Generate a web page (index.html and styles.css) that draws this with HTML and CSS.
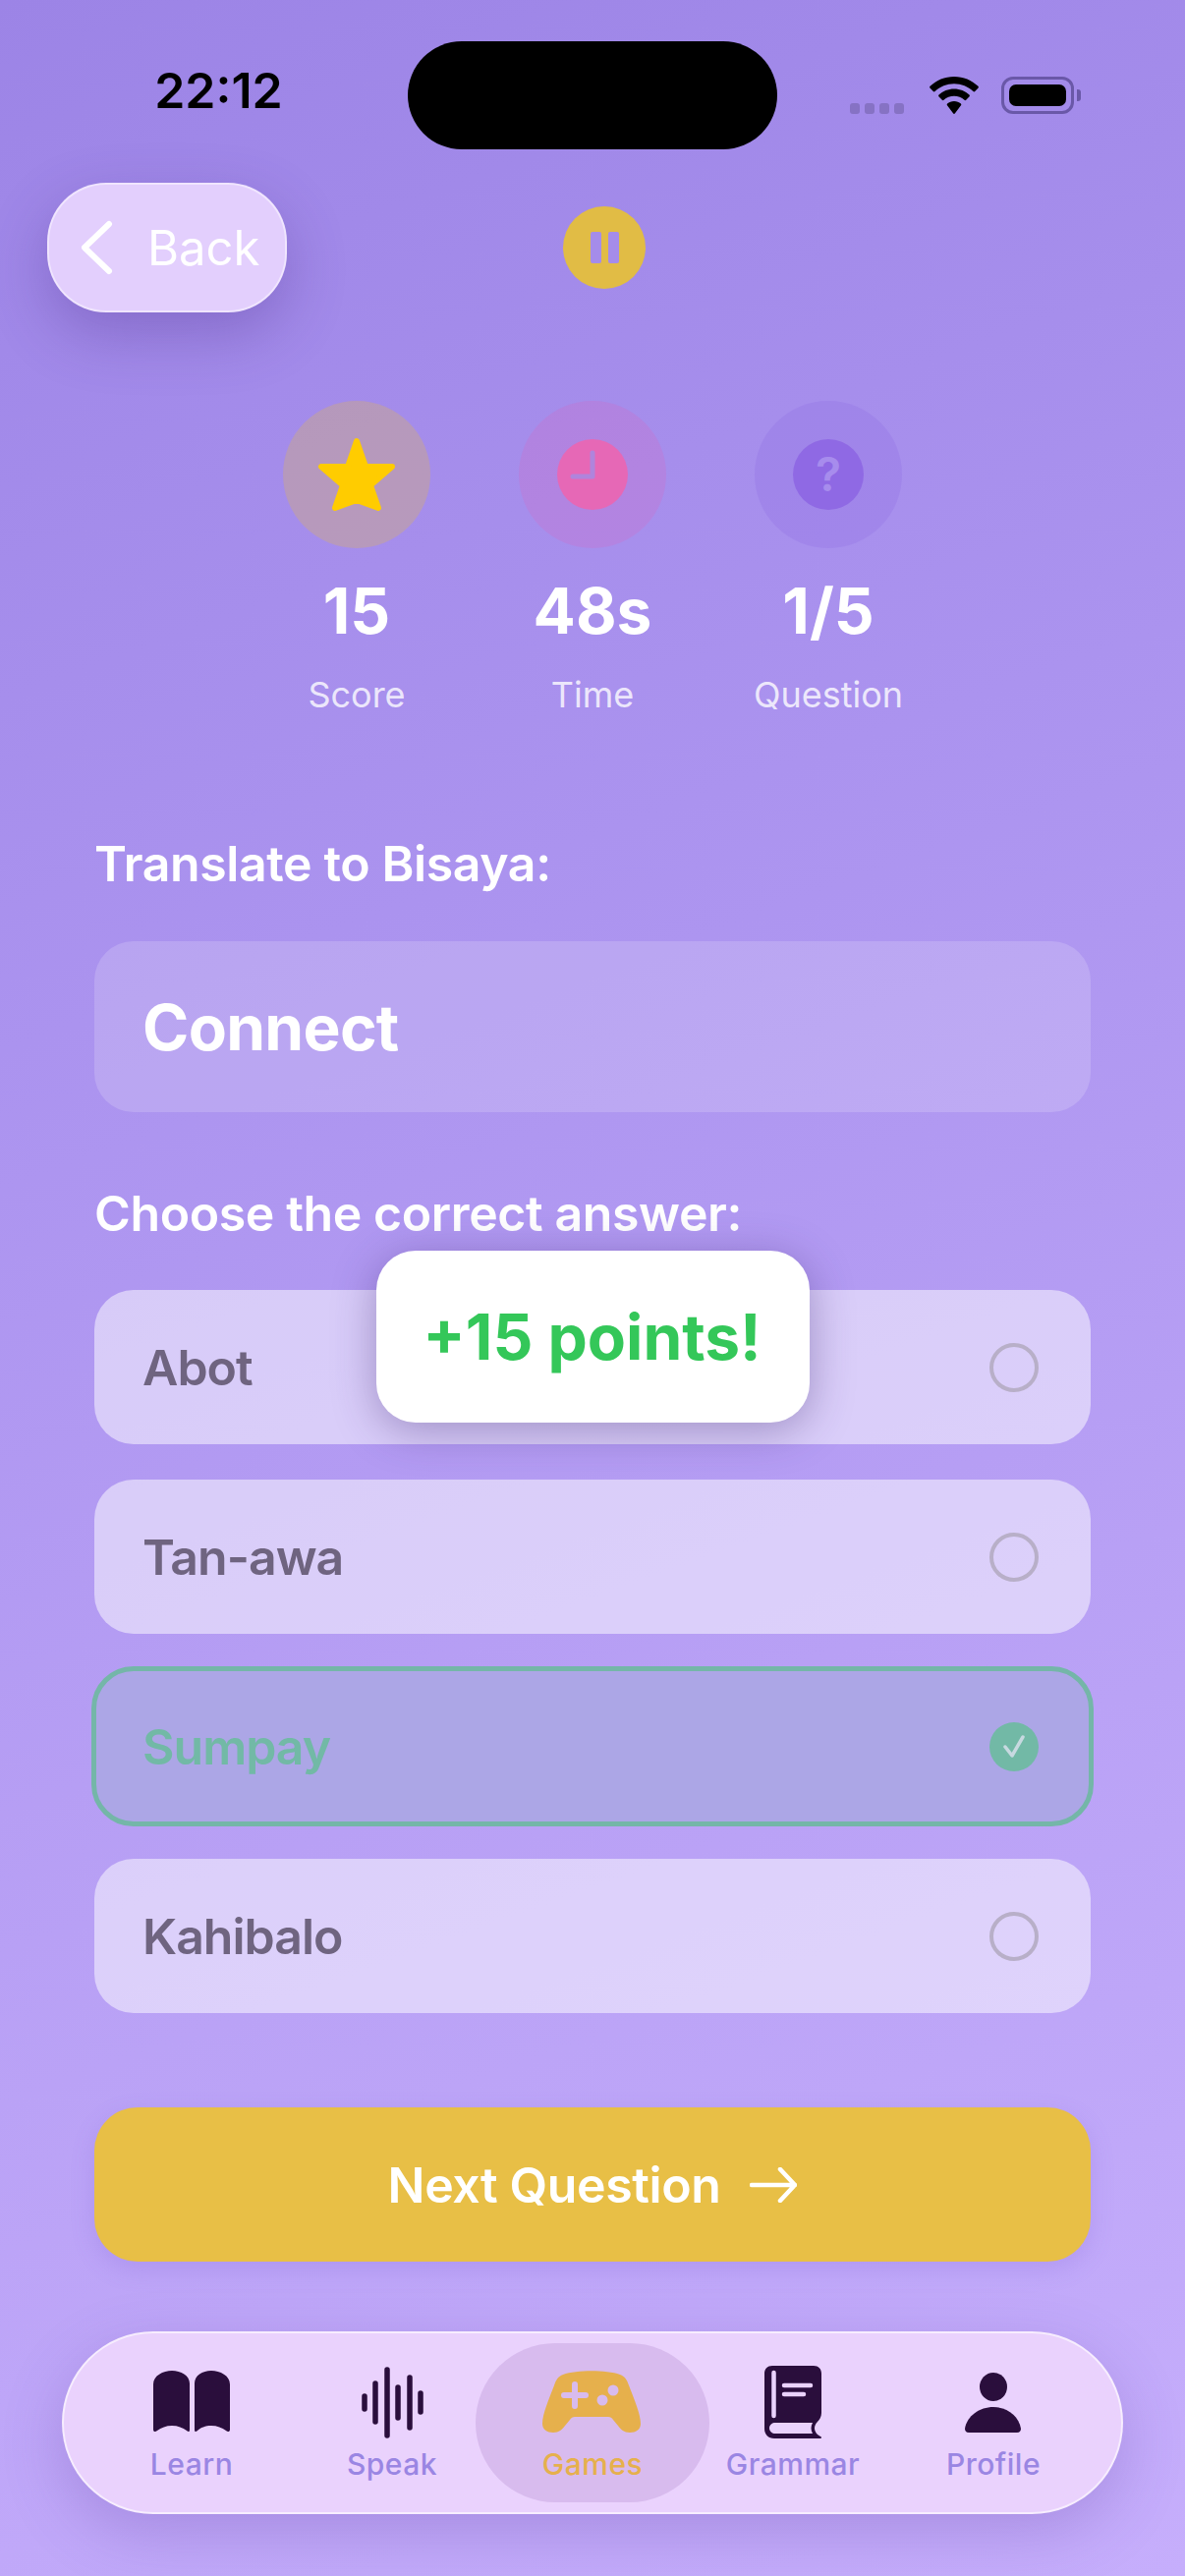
FILE: index.html
```html
<!DOCTYPE html>
<html>
<head>
    <meta charset="UTF-8">
    <title>Bisaya Quiz</title>
    <link rel="stylesheet" href="styles.css">
</head>
<body>
    <div class="status-bar">
        <div class="status-time">22:12</div>
        <div class="island"></div>
        <div class="status-icons">
            <div class="signal"><span></span><span></span><span></span><span></span></div>
            <svg class="wifi" width="50" height="38" viewBox="0 0 50 38">
                <path d="M25 0C15.500 0 7 3.700 0.500 9.800C0 10.300 0 11 0.400 11.500L3.800 15C4.300 15.500 5 15.500 5.500 15C10.700 10.200 17.500 7.300 25 7.300C32.500 7.300 39.300 10.200 44.500 15C45 15.500 45.700 15.500 46.200 15L49.600 11.500C50 11 50 10.300 49.500 9.800C43 3.700 34.500 0 25 0Z"/>
                <path d="M25 12.500C19 12.500 13.600 14.800 9.500 18.600C9 19.100 9 19.800 9.400 20.300L12.800 23.800C13.300 24.300 14 24.300 14.500 23.800C17.300 21.300 21 19.800 25 19.800C29 19.800 32.700 21.300 35.500 23.800C36 24.300 36.700 24.300 37.200 23.800L40.600 20.300C41 19.800 41 19.100 40.500 18.600C36.400 14.800 31 12.500 25 12.500Z"/>
                <path d="M25 25C22.300 25 19.900 26 18.100 27.600C17.600 28.100 17.600 28.800 18 29.300L24.200 37.600C24.600 38.100 25.400 38.100 25.800 37.600L32 29.300C32.400 28.800 32.400 28.100 31.900 27.600C30.100 26 27.700 25 25 25Z"/>
            </svg>
            <div class="battery"><div class="battery-level"></div></div>
            <div class="battery-cap"></div>
        </div>
    </div>

    <div class="top-row">
        <div class="back-btn">
            <svg width="36" height="60" viewBox="0 0 36 60">
                <path class="back-chevron" d="M32 6L7 30L32 54"/>
            </svg>
            <span>Back</span>
        </div>
        <div class="pause-btn"><span></span><span></span></div>
    </div>

    <div class="stats">
        <div class="stat">
            <div class="stat-circle score-circle">
                <svg width="84" height="80" viewBox="0 0 84 80">
                    <path class="star" d="M42 6L51 32H78L56 51L64 74L42 66L20 74L28 51L6 32H33Z"/>
                </svg>
            </div>
            <div class="stat-value">15</div>
            <div class="stat-label">Score</div>
        </div>
        <div class="stat">
            <div class="stat-circle time-circle">
                <div class="stat-inner time-inner">
                    <svg width="72" height="72" viewBox="0 0 72 72">
                        <path class="clock-hands" d="M36 14V38H16"/>
                    </svg>
                </div>
            </div>
            <div class="stat-value">48s</div>
            <div class="stat-label">Time</div>
        </div>
        <div class="stat">
            <div class="stat-circle question-circle">
                <div class="stat-inner question-inner">?</div>
            </div>
            <div class="stat-value">1/5</div>
            <div class="stat-label">Question</div>
        </div>
    </div>

    <div class="quiz">
        <h2 class="quiz-heading">Translate to Bisaya:</h2>
        <div class="word-box">Connect</div>
        <h2 class="quiz-heading answer-heading">Choose the correct answer:</h2>

        <div class="options">
            <div class="toast">+15 points!</div>
            <div class="option"><span>Abot</span><div class="radio"></div></div>
            <div class="option"><span>Tan-awa</span><div class="radio"></div></div>
            <div class="option correct">
                <span>Sumpay</span>
                <div class="radio-checked">
                    <svg width="50" height="50" viewBox="0 0 50 50">
                        <path d="M16 25L23 34L34 15"/>
                    </svg>
                </div>
            </div>
            <div class="option"><span>Kahibalo</span><div class="radio"></div></div>
        </div>

        <div class="next-btn">
            <span>Next Question</span>
            <svg width="48" height="36" viewBox="0 0 48 36">
                <path d="M2 18H46M31 2L46 18L31 34"/>
            </svg>
        </div>
    </div>

    <div class="tab-bar">
        <div class="tab">
            <svg class="tab-icon" width="120" height="76" viewBox="0 0 120 76">
                <path d="M21 20C21 11 31 6 40 6C49 6 58 11 58 19V66C58 68 57 69 55 67C51 64 46 62 40 62C34 62 29 64 25 67C23 69 21 68 21 66Z"/>
                <path d="M99 20C99 11 89 6 80 6C71 6 63 11 63 19V66C63 68 64 69 66 67C69 64 74 62 80 62C86 62 91 64 95 67C97 69 99 68 99 66Z"/>
            </svg>
            <span>Learn</span>
        </div>
        <div class="tab">
            <svg class="tab-icon wave" width="120" height="76" viewBox="0 0 120 76">
                <path d="M32 32V45M43 19V58M55 5V72M66 23V54M78 13V64M89 29V48"/>
            </svg>
            <span>Speak</span>
        </div>
        <div class="tab active">
            <svg class="tab-icon" width="120" height="76" viewBox="0 0 120 76">
                <path d="M30 10C44 5 74 5 88 10C93 12 95 15 97 21C102 34 109 50 109 60C109 66 104 69 98 69C92 69 89 66 86 62L81 56C80 54 78 53 76 53H42C40 53 38 54 37 56L32 62C29 66 26 69 20 69C14 69 9 66 9 60C9 50 16 34 21 21C23 15 25 12 30 10Z"/>
                <path class="pad-keys" d="M42 20V42M31 31H53"/>
                <circle class="pad-dot" cx="81" cy="26" r="5.500"/>
                <circle class="pad-dot" cx="70" cy="36" r="5.500"/>
            </svg>
            <span>Games</span>
        </div>
        <div class="tab">
            <svg class="tab-icon" width="120" height="76" viewBox="0 0 120 76">
                <path d="M39 1H81C86 1 89 4 89 9V49C89 53 87 56 85 58C81 62 81 67 85 71L88 73C90 74 89 75 87 75H41C35 75 31 71 31 65V9C31 4 34 1 39 1Z"/>
                <path class="book-page" d="M42 59H80C78 63 78 66 80 70H42C39 70 36 68 36 64.500C36 61 39 59 42 59Z"/>
                <path class="book-lines" d="M40.500 8V52M51 21H78M51 30H71"/>
            </svg>
            <span>Grammar</span>
        </div>
        <div class="tab">
            <svg class="tab-icon" width="120" height="76" viewBox="0 0 120 76">
                <ellipse cx="60" cy="22.500" rx="14" ry="14.500"/>
                <path d="M35 69C32 69 31 67 31 65C33 52 46 43 60 43C74 43 86 52 88 65C88 67 87 69 84 69Z"/>
            </svg>
            <span>Profile</span>
        </div>
    </div>
</body>
</html>
```

FILE: styles.css
```css
* {
    box-sizing: border-box;
}
html, body {
    margin: 0;
    padding: 0;
}
body {
    width: 1206px;
    height: 2622px;
    overflow: hidden;
    font-family: "Inter", "Liberation Sans", sans-serif;
    color: white;
    background: linear-gradient(160deg, #9c84e6 0%, #ab93ef 35%, #b8a0f5 65%, #c6aefc 100%);
}

/* status bar */
.status-bar {
    display: flex;
    padding-top: 42px;
    height: 152px;
}
.status-time {
    width: 415px;
    padding: 20px 0 0 30px;
    text-align: center;
    font-size: 50px;
    line-height: 60px;
    font-weight: 600;
    color: black;
}
.island {
    width: 376px;
    height: 110px;
    border-radius: 55px;
    background: black;
}
.status-icons {
    display: flex;
    align-items: flex-start;
    padding: 36px 0 0 74px;
}
.signal {
    display: flex;
    gap: 5px;
    margin-top: 27px;
}
.signal span {
    width: 10px;
    height: 11px;
    border-radius: 3px;
    background: #8672c4;
}
.wifi {
    margin-left: 26px;
}
.wifi path {
    fill: black;
}
.battery {
    width: 74px;
    height: 38px;
    margin-left: 23px;
    padding: 5px;
    border: 3px solid #6a58a8;
    border-radius: 12px;
}
.battery-level {
    height: 100%;
    border-radius: 7px;
    background: black;
}
.battery-cap {
    width: 4px;
    height: 12px;
    margin: 13px 0 0 3px;
    border-radius: 0 3px 3px 0;
    background: #6a58a8;
}

/* back and pause */
.top-row {
    display: flex;
    align-items: center;
    margin-top: 34px;
    padding-left: 48px;
}
.back-btn {
    display: flex;
    align-items: center;
    gap: 35px;
    width: 244px;
    height: 132px;
    padding-left: 29px;
    border: 2px solid rgba(255, 255, 255, 0.45);
    border-radius: 60px;
    background: #e3cffd;
    box-shadow: 0 22px 60px rgba(70, 40, 130, 0.3);
    font-size: 49px;
    font-weight: 400;
}
.back-chevron {
    fill: none;
    stroke: white;
    stroke-width: 6;
    stroke-linecap: round;
    stroke-linejoin: round;
}
.pause-btn {
    display: flex;
    justify-content: center;
    align-items: center;
    gap: 7px;
    width: 84px;
    height: 84px;
    margin-left: 281px;
    border-radius: 50%;
    background: #e1bc45;
}
.pause-btn span {
    width: 11px;
    height: 32px;
    border-radius: 2px;
    background: #a58cea;
}

/* stats */
.stats {
    display: flex;
    justify-content: center;
    gap: 90px;
    margin-top: 90px;
}
.stat {
    width: 150px;
    display: flex;
    flex-direction: column;
    align-items: center;
}
.stat-circle {
    display: flex;
    justify-content: center;
    align-items: center;
    width: 150px;
    height: 150px;
    border-radius: 50%;
}
.score-circle {
    background: rgba(255, 204, 0, 0.2);
}
.time-circle {
    background: rgba(255, 70, 160, 0.14);
}
.question-circle {
    background: rgba(120, 80, 220, 0.14);
}
.stat-inner {
    width: 72px;
    height: 72px;
    border-radius: 50%;
    text-align: center;
}
.star {
    fill: #ffcc00;
    stroke: #ffcc00;
    stroke-width: 6;
    stroke-linejoin: round;
}
.time-inner {
    background: #e668b6;
}
.clock-hands {
    fill: none;
    stroke: #b084dc;
    stroke-width: 5;
    stroke-linecap: round;
    stroke-linejoin: round;
}
.question-inner {
    background: #8f69e4;
    color: #a78ced;
    font-size: 48px;
    line-height: 72px;
    font-weight: 600;
}
.stat-value {
    margin-top: 25px;
    font-size: 64px;
    line-height: 78px;
    font-weight: 700;
    white-space: nowrap;
}
.stat-label {
    margin-top: 24px;
    font-size: 36px;
    line-height: 44px;
    color: rgba(255, 255, 255, 0.8);
    white-space: nowrap;
}

/* quiz */
.quiz {
    margin-top: 121px;
    padding: 0 96px;
}
.quiz-heading {
    margin: 0;
    font-size: 50px;
    line-height: 58px;
    font-weight: 600;
    letter-spacing: -0.4px;
}
.answer-heading {
    margin-top: 74px;
}
.word-box {
    display: flex;
    align-items: center;
    height: 174px;
    margin-top: 50px;
    padding-left: 49px;
    border-radius: 40px;
    background: rgba(255, 255, 255, 0.17);
    font-size: 64px;
    font-weight: 700;
    letter-spacing: -0.7px;
}
.options {
    position: relative;
    display: flex;
    flex-direction: column;
    gap: 36px;
    margin-top: 49px;
}
.option {
    display: flex;
    justify-content: space-between;
    align-items: center;
    height: 157px;
    padding: 0 53px 0 49px;
    border-radius: 40px;
    background: rgba(255, 255, 255, 0.5);
    color: #6f6480;
    font-size: 50px;
    font-weight: 600;
    letter-spacing: -1px;
}
.option.correct {
    background: #aca6e6;
    color: #72b9a6;
    outline: 5px solid #74b6a8;
    outline-offset: -2px;
}
.radio {
    width: 50px;
    height: 50px;
    border: 4px solid #b8afc8;
    border-radius: 50%;
}
.radio-checked {
    width: 50px;
    height: 50px;
    border-radius: 50%;
    background: #72b9a6;
}
.radio-checked svg {
    display: block;
}
.radio-checked path {
    fill: none;
    stroke: #c7d9e0;
    stroke-width: 3.500;
    stroke-linecap: round;
    stroke-linejoin: round;
}
.toast {
    position: absolute;
    left: 287px;
    top: -40px;
    display: flex;
    justify-content: center;
    align-items: center;
    width: 441px;
    height: 175px;
    padding-right: 2px;
    border-radius: 40px;
    background: white;
    box-shadow: 0 8px 44px rgba(60, 40, 110, 0.38);
    color: #34c759;
    font-size: 64px;
    font-weight: 700;
}
.next-btn {
    display: flex;
    justify-content: center;
    align-items: center;
    gap: 30px;
    height: 157px;
    margin-top: 96px;
    border-radius: 44px;
    background: #e8bf46;
    box-shadow: 0 8px 24px rgba(120, 90, 210, 0.2);
    font-size: 50px;
    font-weight: 600;
    letter-spacing: -0.4px;
}
.next-btn path {
    fill: none;
    stroke: white;
    stroke-width: 4.500;
    stroke-linecap: round;
    stroke-linejoin: round;
}

/* tab bar */
.tab-bar {
    display: grid;
    grid-template-columns: repeat(5, 204px);
    width: 1080px;
    height: 186px;
    margin: 71px 0 0 63px;
    padding: 32px 28px 0;
    border: 2px solid rgba(255, 255, 255, 0.6);
    border-radius: 93px;
    background: #ead2fd;
    box-shadow: 0 20px 60px rgba(90, 60, 160, 0.25);
}
.tab {
    position: relative;
    display: flex;
    flex-direction: column;
    align-items: center;
    color: #9a86e3;
    font-size: 30px;
    line-height: 36px;
    font-weight: 500;
    letter-spacing: 0.500px;
}
.tab span {
    position: relative;
    margin-top: 7px;
}
.tab-icon {
    position: relative;
    fill: #2a0e3c;
}
.tab.active {
    color: #e6b04c;
}
.tab.active::before {
    content: "";
    position: absolute;
    left: -17px;
    right: -17px;
    top: -22px;
    height: 162px;
    border-radius: 81px;
    background: #d8bbee;
}
.tab.active .tab-icon {
    fill: #e6b04c;
}
.pad-keys {
    fill: none;
    stroke: #d8bbee;
    stroke-width: 6;
    stroke-linecap: round;
}
.pad-dot {
    fill: #d8bbee;
}
.wave {
    fill: none;
    stroke: #2a0e3c;
    stroke-width: 5.500;
    stroke-linecap: round;
}
.book-page {
    fill: #ead2fd;
}
.book-lines {
    fill: none;
    stroke: #ead2fd;
    stroke-width: 4.500;
    stroke-linecap: round;
}
```
